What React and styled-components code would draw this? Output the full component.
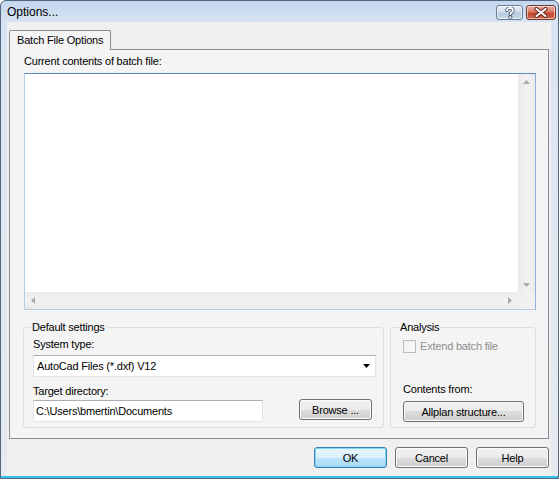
import React from "react";
import styled, { createGlobalStyle } from "styled-components";

// page reset
const GlobalStyle = createGlobalStyle`
  html, body {
    margin: 0;
    padding: 0;
    background: #ffffff;
  }
  body {
    font-family: "Liberation Sans", Arial, sans-serif;
    font-size: 11px;
    color: #000;
  }
  * {
    box-sizing: border-box;
  }
`;

// window frame
const Window = styled.div`
  width: 559px;
  height: 479px;
  display: flex;
  flex-direction: column;
  border: 1px solid #51667f;
  border-radius: 6px 6px 0 0;
  background: linear-gradient(180deg, #c4d7ee 0px, #d8e4f3 22px, #dde6f0 140px, #e6eaef 100%);
  box-shadow: inset 0 -2px 0 #37c1ee;
  overflow: hidden;
`;

const TitleBar = styled.div`
  height: 21px;
  flex-shrink: 0;
  display: flex;
  align-items: flex-start;
  justify-content: space-between;
  padding: 4px 2px 0 6px;
`;

const TitleText = styled.div`
  font-size: 12px;
  line-height: 14px;
  color: #000;
`;

const CaptionButtons = styled.div`
  display: flex;
  gap: 3px;
`;

const CaptionButton = styled.div`
  width: ${(p) => (p.$close ? "30px" : "27px")};
  height: 15px;
  border: 1px solid ${(p) => (p.$close ? "#7a3629" : "#6a7d94")};
  border-radius: 3px;
  display: flex;
  align-items: center;
  justify-content: center;
  background: ${(p) =>
    p.$close
      ? "linear-gradient(180deg, #eab0a4 0%, #d97b66 45%, #c5472f 55%, #cf6a4f 100%)"
      : "linear-gradient(180deg, #e8f0f8 0%, #d0dded 45%, #b9cbe1 55%, #c9d8ea 100%)"};
  box-shadow: inset 0 0 0 1px rgba(255, 255, 255, 0.55);
`;

// the help glyph of the caption button
const HelpIcon = () => (
  <svg width="10" height="12" viewBox="0 0 10 12">
    <path
      d="M2 3.6 C2 1.6 3.4 1 5 1 C6.8 1 8 2 8 3.5 C8 5.2 5.4 5.4 5.4 7.3"
      fill="none"
      stroke="#3b4d63"
      strokeWidth="3.4"
      strokeLinecap="round"
    />
    <rect x="3.6" y="8.6" width="3.6" height="3" rx="0.6" fill="#3b4d63" />
    <path
      d="M2 3.6 C2 1.6 3.4 1 5 1 C6.8 1 8 2 8 3.5 C8 5.2 5.4 5.4 5.4 7.3"
      fill="none"
      stroke="#ffffff"
      strokeWidth="1.8"
      strokeLinecap="round"
    />
    <rect x="4.4" y="9.3" width="2" height="1.7" fill="#ffffff" />
  </svg>
);

// client area
const Client = styled.div`
  flex: 1;
  display: flex;
  flex-direction: column;
  margin: 0 7px 2px 6px;
  padding: 8px 2px 0 2px;
  background: #f0f0f0;
`;

const TabStrip = styled.div`
  display: flex;
  position: relative;
  z-index: 1;
  margin-bottom: -1px;
`;

const Tab = styled.div`
  width: 102px;
  height: 20px;
  padding: 2px 0 0 7px;
  border: 1px solid #898c95;
  border-bottom: none;
  border-radius: 2px 2px 0 0;
  background: #f4f4f4;
  line-height: 14px;
  letter-spacing: -0.2px;
`;

const Panel = styled.div`
  width: 540px;
  height: 390px;
  border: 1px solid #898c95;
  padding: 5px 12px 0 14px;
  background: #f4f4f4;
  display: flex;
  flex-direction: column;
`;

const Label = styled.div`
  line-height: 13px;
  letter-spacing: -0.2px;
  color: ${(p) => (p.$disabled ? "#8e8e8e" : "#000")};
  margin-top: ${(p) => p.$mt || 0}px;
  margin-bottom: ${(p) => p.$mb || 0}px;
`;

// text area with scrollbars
const TextBox = styled.div`
  width: 512px;
  height: 237px;
  border: 1px solid #b4cde6;
  border-top-color: #5a8cc0;
  border-right-color: #8fb3d8;
  display: grid;
  grid-template-columns: 1fr 17px;
  grid-template-rows: 1fr 17px;
  background: #fff;
`;

const TextContent = styled.div`
  background: #fff;
`;

const ScrollTrack = styled.div`
  display: flex;
  flex-direction: ${(p) => (p.$vertical ? "column" : "row")};
  justify-content: space-between;
  align-items: center;
  padding: ${(p) => (p.$vertical ? "6px 0 5px" : "0 6px 0 6px")};
  background: ${(p) =>
    p.$vertical
      ? "linear-gradient(90deg, #eaeaea, #f2f2f2 50%, #eaeaea)"
      : "linear-gradient(180deg, #eaeaea, #f2f2f2 50%, #eaeaea)"};
`;

const Corner = styled.div`
  background: #f0f0f0;
`;

const Arrow = ({ dir }) => {
  const pts = {
    up: "0,4 3.5,0 7,4",
    down: "0,0 7,0 3.5,4",
    left: "4,0 4,7 0,3.5",
    right: "0,0 0,7 4,3.5",
  }[dir];
  const vertical = dir === "up" || dir === "down";
  return (
    <svg width={vertical ? 7 : 4} height={vertical ? 4 : 7} viewBox={vertical ? "0 0 7 4" : "0 0 4 7"}>
      <polygon points={pts} fill="#a9a9a9" />
    </svg>
  );
};

// groups
const GroupRow = styled.div`
  display: flex;
  gap: 6px;
  width: 513px;
  margin: 17px 0 0 -1px;
`;

const Group = styled.div`
  width: ${(p) => p.$w}px;
  height: 101px;
  border: 1px solid #d5dfe5;
  border-radius: 3px;
  padding: 0 ${(p) => p.$pr}px 0 ${(p) => p.$pl}px;
  display: flex;
  flex-direction: column;
`;

const Legend = styled.div`
  align-self: flex-start;
  margin: -7px 0 0 ${(p) => p.$ml}px;
  padding: 0 1px;
  background: #f4f4f4;
  line-height: 13px;
  letter-spacing: -0.2px;
`;

const Combo = styled.div`
  width: 343px;
  height: 22px;
  border: 1px solid #e2e3ea;
  border-top-color: #abadb3;
  background: #fff;
  display: flex;
  align-items: center;
  justify-content: space-between;
  padding: 0 5px 0 3px;
  letter-spacing: -0.2px;
`;

const FieldRow = styled.div`
  display: flex;
  align-items: flex-start;
  width: 343px;
`;

const TextField = styled.input`
  width: 230px;
  height: 22px;
  border: 1px solid #e2e3ea;
  border-top-color: #abadb3;
  background: #fff;
  padding: 0 2px;
  font-family: "Liberation Sans", Arial, sans-serif;
  font-size: 11px;
  letter-spacing: -0.2px;
  color: #000;
  outline: none;
`;

const CheckRow = styled.div`
  display: flex;
  align-items: center;
  gap: 4px;
  margin-top: 6px;
`;

const CheckBox = styled.div`
  width: 13px;
  height: 13px;
  border: 1px solid #bcbcbc;
  background: linear-gradient(135deg, #f0f0f0, #fafafa);
  box-shadow: inset 0 0 0 1px #f4f4f4;
`;

const Button = styled.div`
  width: ${(p) => p.$w || 73}px;
  height: 21px;
  flex-shrink: 0;
  border: 1px solid ${(p) => (p.$default ? "#3c7fb1" : "#707070")};
  border-radius: 3px;
  display: flex;
  align-items: center;
  justify-content: center;
  letter-spacing: -0.2px;
  margin-top: ${(p) => p.$mt || 0}px;
  margin-left: ${(p) => p.$ml || "0px"};
  margin-right: ${(p) => p.$mr || 0}px;
  background: ${(p) =>
    p.$default
      ? "linear-gradient(180deg, #eaf6fd 0%, #d9f0fc 50%, #bee6fd 50%, #a7d9f5 100%)"
      : "linear-gradient(180deg, #f2f2f2 0%, #ebebeb 50%, #dddddd 50%, #cfcfcf 100%)"};
  box-shadow: inset 0 0 0 1px ${(p) => (p.$default ? "#7fd6f7" : "#fbfbfb")};
`;

const Footer = styled.div`
  display: flex;
  justify-content: flex-end;
  gap: 8px;
  margin-top: 8px;
`;

export default function App() {
  return (
    <>
      <GlobalStyle />
      <Window>
        <TitleBar>
          <TitleText>Options...</TitleText>
          <CaptionButtons>
            <CaptionButton>
              <HelpIcon />
            </CaptionButton>
            <CaptionButton $close>
              <svg width="14" height="11" viewBox="0 0 14 11">
                <path d="M2.5 2 L11.5 9 M11.5 2 L2.5 9" stroke="#5a1c12" strokeWidth="4" strokeLinecap="round" />
                <path d="M2.5 2 L11.5 9 M11.5 2 L2.5 9" stroke="#ffffff" strokeWidth="2.2" strokeLinecap="round" />
              </svg>
            </CaptionButton>
          </CaptionButtons>
        </TitleBar>
        <Client>
          <TabStrip>
            <Tab>Batch File Options</Tab>
          </TabStrip>
          <Panel>
            <Label $mb={5}>Current contents of batch file:</Label>
            <TextBox>
              <TextContent />
              <ScrollTrack $vertical>
                <Arrow dir="up" />
                <Arrow dir="down" />
              </ScrollTrack>
              <ScrollTrack>
                <Arrow dir="left" />
                <Arrow dir="right" />
              </ScrollTrack>
              <Corner />
            </TextBox>
            <GroupRow>
              <Group $w={361} $pl={9} $pr={7}>
                <Legend $ml={-2}>Default settings</Legend>
                <Label $mt={4} $mb={4}>System type:</Label>
                <Combo>
                  <span>AutoCad Files (*.dxf) V12</span>
                  <svg width="7" height="4" viewBox="0 0 7 4">
                    <polygon points="0,0 7,0 3.5,4" fill="#000" />
                  </svg>
                </Combo>
                <Label $mt={8} $mb={2}>Target directory:</Label>
                <FieldRow>
                  <TextField readOnly value="C:\Users\bmertin\Documents" />
                  <Button $mt={-1} $ml="auto" $mr={4}>Browse ...</Button>
                </FieldRow>
              </Group>
              <Group $w={146} $pl={12} $pr={8}>
                <Legend $ml={-4}>Analysis</Legend>
                <CheckRow>
                  <CheckBox />
                  <Label $disabled>Extend batch file</Label>
                </CheckRow>
                <Label $mt={30}>Contents from:</Label>
                <Button $w={121} $mt={5}>Allplan structure...</Button>
              </Group>
            </GroupRow>
          </Panel>
          <Footer>
            <Button $default>OK</Button>
            <Button>Cancel</Button>
            <Button>Help</Button>
          </Footer>
        </Client>
      </Window>
    </>
  );
}
